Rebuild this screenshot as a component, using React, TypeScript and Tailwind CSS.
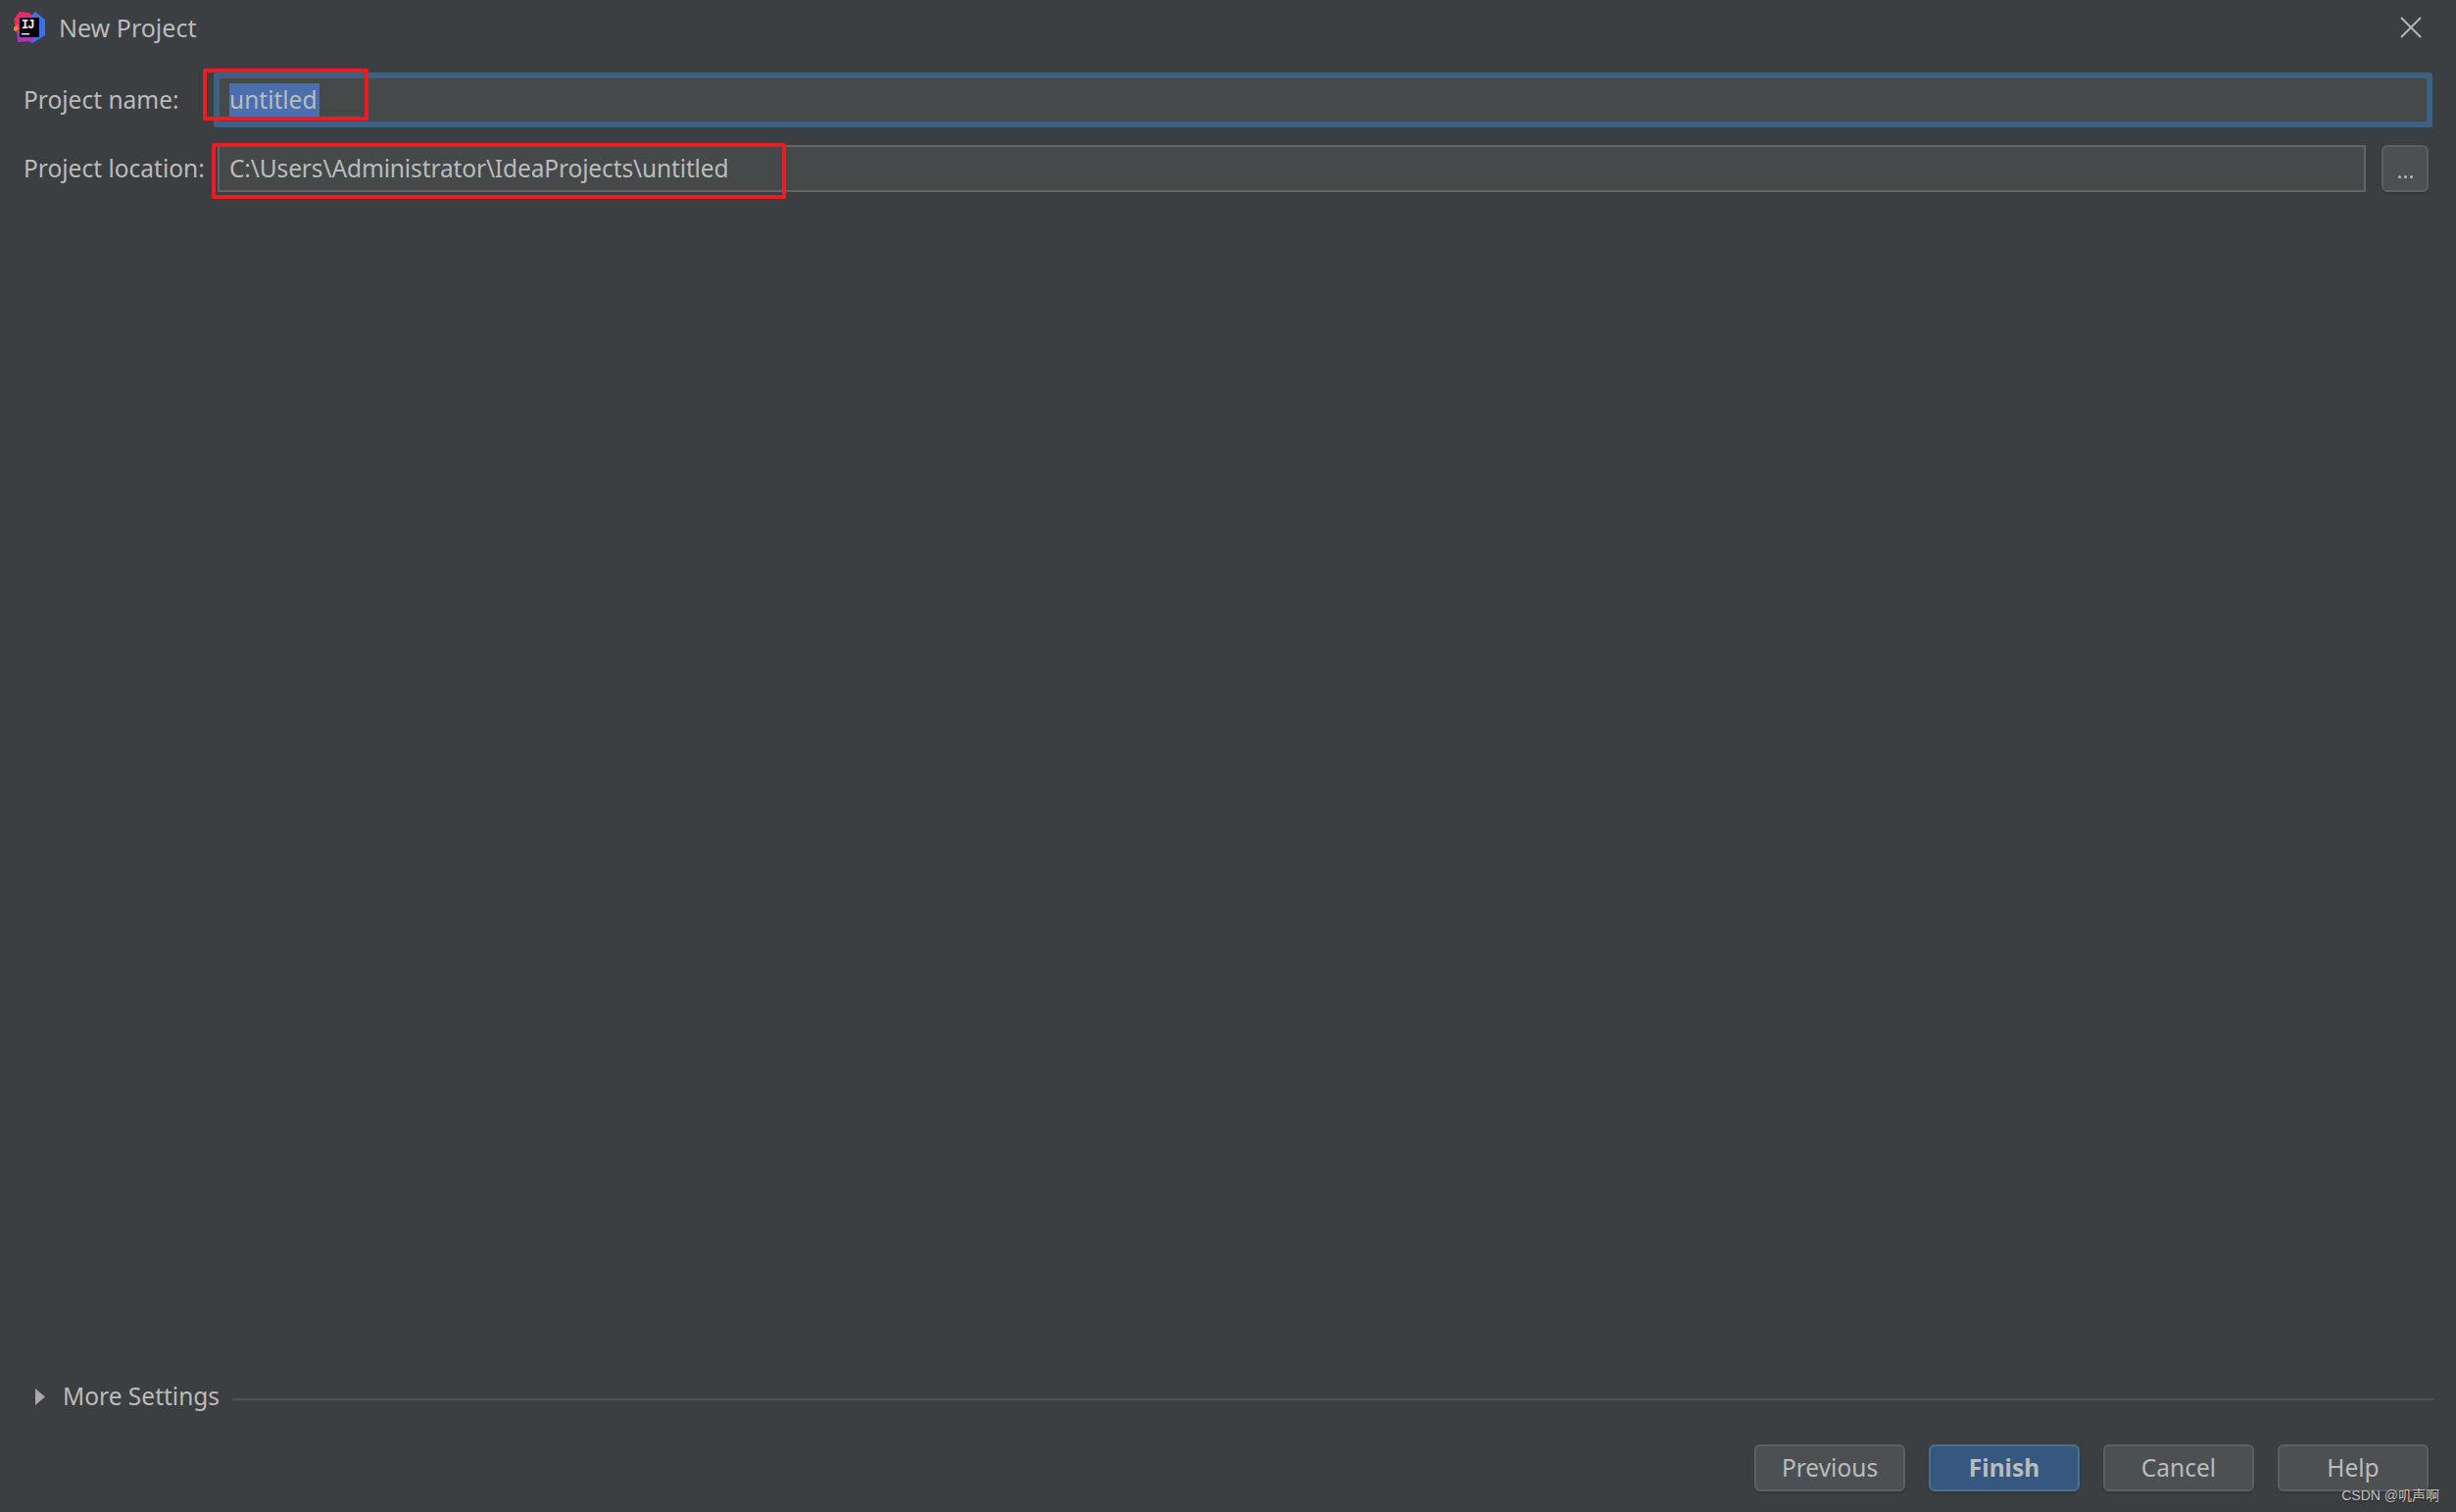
import React from 'react';

const IdeaLogo = () => (
  <svg width="34" height="34" viewBox="0 0 34 34" className="shrink-0">
    <polygon points="1,9 7,1 17,2 23,8 10,24 4,23" fill="#f0286a" />
    <polygon points="17,7 23,1 33,9 33,25 20,33 12,28" fill="#3f6fe8" />
    <polygon points="1,17 5,14 6,22 1,20" fill="#f7851c" />
    <polygon points="4,19 22,27 20,31 5,32" fill="#a735b5" />
    <rect x="7" y="7" width="20" height="20" fill="#000000" />
    <text x="9" y="18" fontFamily="Liberation Mono, monospace" fontWeight="700" fontSize="12" letterSpacing="-1" fill="#ffffff">IJ</text>
    <rect x="9" y="23" width="8" height="1.4" fill="#ffffff" />
  </svg>
);

const Field = ({ label, children }: { label: string; children: React.ReactNode }) => (
  <div className="flex items-center">
    <label className="w-[218px] shrink-0 pl-[24px] text-[24.5px] whitespace-nowrap">{label}</label>
    {children}
  </div>
);

const buttons = ['Previous', 'Finish', 'Cancel', 'Help'];

export default function App() {
  return (
    <div className="relative flex h-[1543px] w-[2506px] flex-col overflow-hidden bg-[#3c3f41] font-['Noto_Sans','Open_Sans',sans-serif] text-[#bbbbbb]">
      {/* title bar */}
      <div className="flex h-[56px] items-center pl-[13px] pr-[35px]">
        <IdeaLogo />
        <span className="ml-[13px] mt-[2px] text-[25px]">New Project</span>
        <svg width="22" height="22" viewBox="0 0 22 22" className="ml-auto" stroke="#b4b4b4" strokeWidth="2" fill="none">
          <path d="M1 1 L21 21 M21 1 L1 21" />
        </svg>
      </div>

      {/* form */}
      <div className="mt-[18px] flex flex-col pr-[24px]">
        <Field label="Project name:">
          <div className="relative flex h-[56px] flex-1 items-center rounded-[3px] border-[6px] border-[#3d6185] bg-[#45494a] pl-[10px] text-[24.5px]">
            <span className="flex h-[34px] items-center bg-[#4b6eaf] pr-[2px]">untitled</span>
            <div className="absolute left-[-17px] top-[-10px] h-[53px] w-[169px] rounded-[2px] border-[4px] border-[#ed1c24]" />
          </div>
        </Field>

        <div className="mt-[18px]">
          <Field label="Project location:">
            <div className="relative ml-[4px] flex h-[48px] w-[2192px] items-center border-[2px] border-[#646464] bg-[#45494a] pl-[10px] text-[24.5px] tracking-[-0.13px]">
              <span className="whitespace-nowrap">C:\Users\Administrator\IdeaProjects\untitled</span>
              <div className="absolute left-[-8px] top-[-4px] h-[57px] w-[586px] rounded-[2px] border-[4px] border-[#ed1c24]" />
            </div>
            <button className="ml-[16px] flex h-[48px] w-[48px] items-end justify-center rounded-[6px] border-[2px] border-[#5e6060] bg-[#4c5052] pb-[12px] shadow-[0_2px_2px_rgba(0,0,0,0.15)]">
              <span className="flex gap-[3px]">
                <i className="h-[3px] w-[3px] rounded-full bg-[#bbbbbb]" />
                <i className="h-[3px] w-[3px] rounded-full bg-[#bbbbbb]" />
                <i className="h-[3px] w-[3px] rounded-full bg-[#bbbbbb]" />
              </span>
            </button>
          </Field>
        </div>
      </div>

      {/* more settings */}
      <div className="mt-auto flex items-center pl-[36px] pr-[22px]">
        <svg width="10" height="17" viewBox="0 0 10 17" fill="#a8a8a8" className="shrink-0">
          <polygon points="0,0 10,8.5 0,17" />
        </svg>
        <span className="ml-[18px] text-[24.5px] whitespace-nowrap">More Settings</span>
        <div className="ml-[13px] mt-[4px] h-[2px] flex-1 bg-[#515151]" />
      </div>

      {/* footer buttons */}
      <div className="mb-[21px] mt-[30px] flex justify-end gap-[24px] pr-[28px]">
        {buttons.map((name) =>
          name === 'Finish' ? (
            <button key={name} className="h-[48px] w-[154px] rounded-[6px] border-[2px] border-[#4c708c] bg-[#365880] text-[24.5px] font-bold shadow-[0_2px_2px_rgba(0,0,0,0.15)]">
              {name}
            </button>
          ) : (
            <button key={name} className="h-[48px] w-[154px] rounded-[6px] border-[2px] border-[#5e6060] bg-[#4c5052] text-[24.5px] shadow-[0_2px_2px_rgba(0,0,0,0.15)]">
              {name}
            </button>
          ),
        )}
      </div>

      {/* watermark */}
      <span className="absolute bottom-[8px] right-[17px] font-['Liberation_Sans','Noto_Sans_CJK_SC',sans-serif] text-[14px] leading-[18px] text-[#c4c4c4] [text-shadow:0_1px_1px_rgba(0,0,0,0.5)]">
        CSDN @叽声啊
      </span>
    </div>
  );
}
